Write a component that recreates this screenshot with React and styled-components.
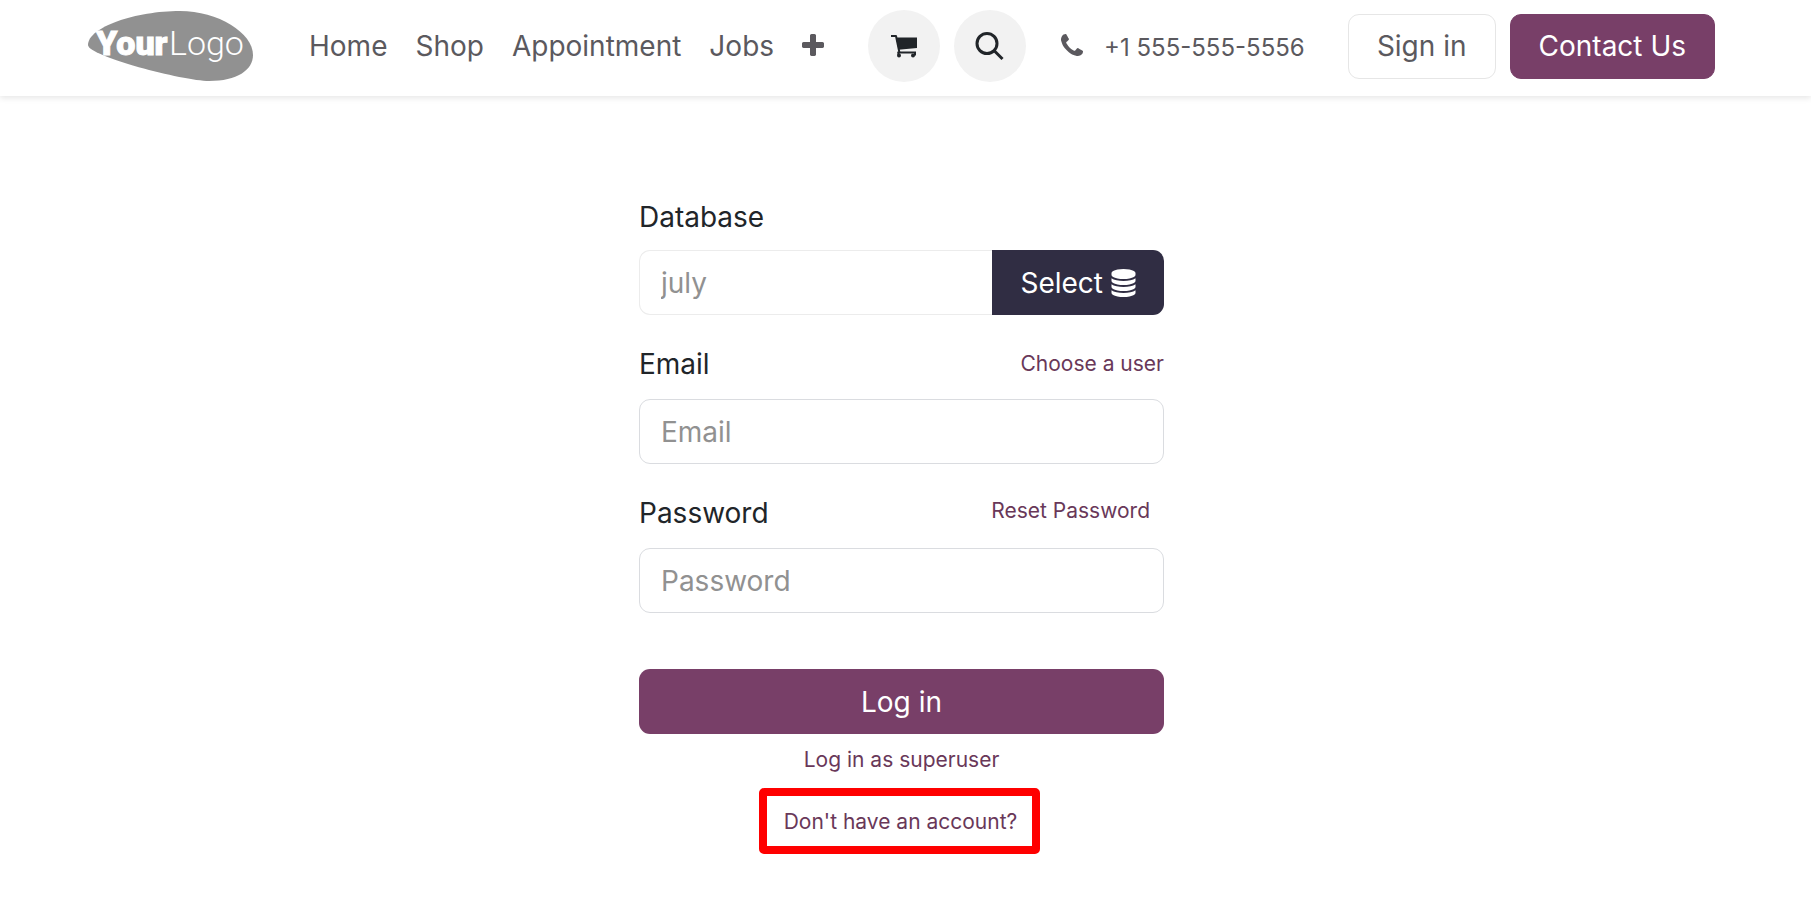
import React from "react";
import styled, { createGlobalStyle } from "styled-components";

const colors = {
  primary: "#783f68",
  primaryDark: "#693859",
  dark: "#302d43",
  text: "#212529",
  nav: "#5b595e",
  muted: "#919191",
  border: "#dadce0",
  circle: "#f2f2f2",
};

const fontSizes = {
  s: "21px",
  m: "24px",
  l: "28px",
};

const GlobalStyle = createGlobalStyle`
  * {
    box-sizing: border-box;
  }

  body {
    margin: 0;
    background-color: white;
    color: ${colors.text};
    font-family: Inter, "Liberation Sans", sans-serif;
    font-size: ${fontSizes.l};
    line-height: 42px;
  }

  button,
  input {
    font: inherit;
  }
`;

const Header = styled.header`
  display: flex;
  align-items: center;
  padding: 10px 96px 14px 88px;
  background-color: white;
  box-shadow: 0 2px 6px rgba(0, 0, 0, 0.1);
`;

const LogoLink = styled.a`
  display: flex;
  margin-right: 42px;
`;

const Nav = styled.nav`
  display: flex;
  align-items: center;
  margin-right: 30px;
`;

const NavLink = styled.a`
  display: flex;
  align-items: center;
  padding: 0 14px;
  color: ${colors.nav};
  text-decoration: none;
`;

const MoreButton = styled.button`
  display: flex;
  padding: 0 14px;
  border: 0;
  background: none;
  color: ${colors.nav};
  cursor: pointer;
`;

const Actions = styled.div`
  display: flex;
  flex: 1;
  align-items: center;
  gap: 14px;
`;

const CircleLink = styled.a`
  display: flex;
  align-items: center;
  justify-content: center;
  width: 72px;
  height: 72px;
  border-radius: 50%;
  background-color: ${colors.circle};
  color: ${colors.text};
`;

const CircleButton = styled(CircleLink)`
  padding: 0;
  border: 0;
  cursor: pointer;
`;

const PhoneLink = styled.a`
  display: flex;
  align-items: center;
  gap: 18px;
  margin: 0 auto 0 18px;
  color: ${colors.nav};
  font-size: ${fontSizes.m};
  text-decoration: none;
`;

const PhoneNumber = styled.span`
  padding-top: 4px;
`;

const ButtonLink = styled.a`
  padding: 10px 28px 11px;
  border: 1px solid ${(props) => (props.$primary ? colors.primary : "#e6e6e6")};
  border-radius: 11px;
  background-color: ${(props) => (props.$primary ? colors.primary : "white")};
  color: ${(props) => (props.$primary ? "white" : colors.nav)};
  text-decoration: none;
`;

const Main = styled.main`
  padding: 100px 8px 70px 0;
`;

const LoginForm = styled.form`
  max-width: 525px;
  margin: 0 auto;
`;

const Field = styled.div`
  margin-bottom: 28px;
`;

const FieldHeader = styled.div`
  display: flex;
  align-items: center;
  justify-content: space-between;
  margin-bottom: ${(props) => (props.$tight ? "12px" : "14px")};
`;

const TextLink = styled.a`
  color: ${colors.primaryDark};
  font-size: ${fontSizes.s};
  text-decoration: none;
`;

const ResetLink = styled(TextLink)`
  padding: 0 14px 4px 0;
  line-height: 38px;
`;

const Input = styled.input`
  display: block;
  width: 100%;
  height: 65px;
  padding: 0 21px;
  border: 1px solid ${colors.border};
  border-radius: 11px;
  background-color: white;
  color: ${colors.muted};
  outline: 0;

  &::placeholder {
    color: ${colors.muted};
    opacity: 1;
  }
`;

const InputGroup = styled.div`
  display: flex;
`;

const DatabaseInput = styled(Input)`
  flex: 1;
  min-width: 0;
  border-color: #ececec;
  border-right: 0;
  border-radius: 11px 0 0 11px;
`;

const SelectButton = styled.button`
  display: flex;
  align-items: center;
  gap: 8px;
  padding: 0 28px;
  border: 0;
  border-radius: 0 11px 11px 0;
  background-color: ${colors.dark};
  color: white;
  cursor: pointer;
`;

const LoginButton = styled.button`
  display: block;
  width: 100%;
  height: 65px;
  margin-top: 56px;
  border: 0;
  border-radius: 11px;
  background-color: ${colors.primary};
  color: white;
  cursor: pointer;
`;

const FormFooter = styled.div`
  display: flex;
  flex-direction: column;
  align-items: center;
  padding-top: 5px;
`;

const SignupBox = styled.div`
  display: flex;
  margin: 7px 4px 0 0;
  padding: 5px 15px 3px 17px;
  border: 8px solid red;
  border-radius: 5px;
`;

const Icon = ({ d, width = 28 }) => (
  <svg
    width={width}
    height="28"
    viewBox={`${(1792 - width * 64) / 2} 0 ${width * 64} 1792`}
    fill="currentColor"
    aria-hidden="true"
  >
    <path d={d} />
  </svg>
);

const icons = {
  plus: "M1600 736v192q0 40-28 68t-68 28h-416v416q0 40-28 68t-68 28h-192q-40 0-68-28t-28-68v-416h-416q-40 0-68-28t-28-68v-192q0-40 28-68t68-28h416v-416q0-40 28-68t68-28h192q40 0 68 28t28 68v416h416q40 0 68 28t28 68z",
  phone:
    "M1600 1240q0 27-10 70.5t-21 68.5q-21 50-122 106-94 51-186 51-27 0-53-3.5t-57.5-12.5-47-14.5-55.5-20.5-49-18q-98-35-175-83-127-79-264-216t-216-264q-48-77-83-175-3-9-18-49t-20.5-55.5-14.5-47-12.5-57.5-3.5-53q0-92 51-186 56-101 106-122 25-11 68.5-21t70.5-10q14 0 21 3 18 6 53 76 11 19 30 54t35 63.5 31 53.5q3 4 17.5 25t21.5 35.5 7 28.5q0 20-28.5 50t-62 55-62 53-28.5 46q0 9 5 22.5t8.5 20.5 14 24 11.5 19q76 137 174 235t235 174q2 1 19 11.5t24 14 20.5 8.5 22.5 5q18 0 46-28.5t53-62 55-62 50-28.5q14 0 28.5 7t35.5 21.5 25 17.5q25 15 53.5 31t63.5 35 54 30q70 35 76 53 3 7 3 21z",
  database:
    "M896 768q237 0 443-43t325-127v170q0 69-103 128t-280 93.5-385 34.5-385-34.5-280-93.5-103-128v-170q119 84 325 127t443 43zm0 768q237 0 443-43t325-127v170q0 69-103 128t-280 93.5-385 34.5-385-34.5-280-93.5-103-128v-170q119 84 325 127t443 43zm0-384q237 0 443-43t325-127v170q0 69-103 128t-280 93.5-385 34.5-385-34.5-280-93.5-103-128v-170q119 84 325 127t443 43zm0-1152q208 0 385 34.5t280 93.5 103 128v128q0 69-103 128t-280 93.5-385 34.5-385-34.5-280-93.5-103-128v-128q0-69 103-128t280-93.5 385-34.5z",
};

const CartIcon = () => (
  <svg width="28" height="28" viewBox="0 0 28 28" aria-hidden="true">
    <path
      d="M1 4h5l3.500 17"
      fill="none"
      stroke="currentColor"
      strokeWidth="2"
      strokeLinejoin="round"
    />
    <path d="M6 5.500H27v10.500L8.500 17.700z" fill="currentColor" />
    <path d="M7.500 20.500H25v3" fill="none" stroke="currentColor" strokeWidth="2" />
    <path d="M8.500 20v3" stroke="currentColor" strokeWidth="2" />
    <circle cx="9" cy="23.500" r="2" fill="currentColor" />
    <circle cx="23" cy="23.500" r="2" fill="currentColor" />
  </svg>
);

const SearchIcon = () => (
  <svg
    width="30"
    height="30"
    viewBox="0 0 30 30"
    fill="none"
    stroke="currentColor"
    strokeWidth="3"
    aria-hidden="true"
  >
    <circle cx="12" cy="12.500" r="10" />
    <path d="M19 19.500L27.500 28" />
  </svg>
);

const Logo = () => (
  <svg width="165" height="72" viewBox="0 0 165 72" role="img" aria-label="Your Logo">
    <path
      d="M0 35C0 17 48 1 92 1c38 0 73 22 73 44 0 15-16 26-44 26C95 71 0 46 0 35z"
      fill="#919191"
    />
    <g fill="white" fontFamily="Roboto, sans-serif" fontSize="34">
      <text x="8" y="45" fontWeight="900" stroke="white">
        Your
      </text>
      <text x="81" y="45" fontWeight="300">
        Logo
      </text>
    </g>
  </svg>
);

function Navbar() {
  return (
    <Header>
      <LogoLink href="#">
        <Logo />
      </LogoLink>
      <Nav>
        <NavLink href="#">Home</NavLink>
        <NavLink href="#">Shop</NavLink>
        <NavLink href="#">Appointment</NavLink>
        <NavLink href="#">Jobs</NavLink>
        <MoreButton type="button" aria-label="More">
          <Icon d={icons.plus} width={22} />
        </MoreButton>
      </Nav>
      <Actions>
        <CircleLink href="#" aria-label="Cart">
          <CartIcon />
        </CircleLink>
        <CircleButton as="button" type="button" aria-label="Search">
          <SearchIcon />
        </CircleButton>
        <PhoneLink href="tel:+15555555556">
          <Icon d={icons.phone} />
          <PhoneNumber>+1 555-555-5556</PhoneNumber>
        </PhoneLink>
        <ButtonLink href="#">Sign in</ButtonLink>
        <ButtonLink href="#" $primary>
          Contact Us
        </ButtonLink>
      </Actions>
    </Header>
  );
}

function Login() {
  return (
    <LoginForm onSubmit={(e) => e.preventDefault()}>
      <Field>
        <FieldHeader $tight>
          <label htmlFor="db">Database</label>
        </FieldHeader>
        <InputGroup>
          <DatabaseInput id="db" type="text" defaultValue="july" readOnly />
          <SelectButton type="button">
            Select
            <Icon d={icons.database} width={25} />
          </SelectButton>
        </InputGroup>
      </Field>
      <Field>
        <FieldHeader>
          <label htmlFor="login">Email</label>
          <TextLink href="#">Choose a user</TextLink>
        </FieldHeader>
        <Input id="login" type="text" placeholder="Email" />
      </Field>
      <Field>
        <FieldHeader>
          <label htmlFor="password">Password</label>
          <ResetLink href="#">Reset Password</ResetLink>
        </FieldHeader>
        <Input id="password" type="password" placeholder="Password" />
      </Field>
      <LoginButton type="submit">Log in</LoginButton>
      <FormFooter>
        <TextLink href="#">Log in as superuser</TextLink>
        <SignupBox>
          <TextLink href="#">Don't have an account?</TextLink>
        </SignupBox>
      </FormFooter>
    </LoginForm>
  );
}

function App() {
  return (
    <>
      <GlobalStyle />
      <Navbar />
      <Main>
        <Login />
      </Main>
    </>
  );
}

export default App;
